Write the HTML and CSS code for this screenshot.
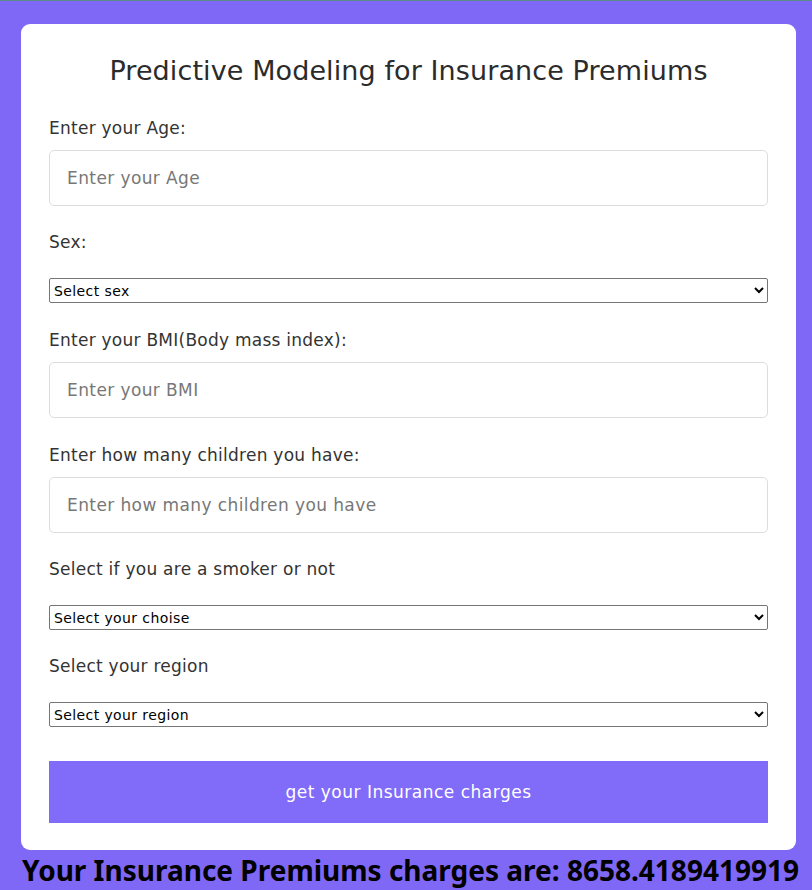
FILE: index.html
```html
<!DOCTYPE html>
<html>
<head>
<meta charset="utf-8">
<title>Insurance Premiums</title>
<link rel="stylesheet" href="styles.css">
</head>
<body>
<div class="topline"></div>
<main class="card">
  <h1 class="title">Predictive Modeling for Insurance Premiums</h1>
  <form class="form">
    <label class="label">Enter your Age:</label>
    <input class="field" type="text" placeholder="Enter your Age">
    <label class="label label-sel">Sex:</label>
    <select class="select"><option>Select sex</option></select>
    <label class="label">Enter your BMI(Body mass index):</label>
    <input class="field" type="text" placeholder="Enter your BMI">
    <label class="label">Enter how many children you have:</label>
    <input class="field" type="text" placeholder="Enter how many children you have">
    <label class="label label-sel">Select if you are a smoker or not</label>
    <select class="select"><option>Select your choise</option></select>
    <label class="label label-sel">Select your region</label>
    <select class="select"><option>Select your region</option></select>
    <button class="btn" type="button">get your Insurance charges</button>
  </form>
</main>
<p class="result">Your Insurance Premiums charges are: 8658.4189419919</p>
</body>
</html>
```
FILE: styles.css
```css
html, body {
  margin: 0;
  padding: 0;
}
body {
  background: #7f68f6;
  font-family: "DejaVu Sans", "Noto Sans", sans-serif;
  color: #333;
  height: 890px;
  overflow: hidden;
}
.topline {
  height: 1px;
  background: #5a8a8a;
}
.card {
  background: #fff;
  margin: 23px 16px 0 21px;
  border-radius: 9px;
  padding: 27px 28px 27px 28px;
}
.title {
  margin: 0;
  text-align: center;
  font-weight: 400;
  font-size: 27px;
  letter-spacing: 0.1px;
  line-height: 40px;
  color: #2b2b2b;
}
.form {
  display: flex;
  flex-direction: column;
}
.label {
  display: block;
  font-size: 17px;
  letter-spacing: 0.25px;
  line-height: 26px;
  margin-top: 24px;
  margin-bottom: 9px;
  color: #333;
}
.label-sel {
  margin-top: 23px;
  margin-bottom: 23px;
}
.field {
  height: 56px;
  box-sizing: border-box;
  border: 1px solid #ddd;
  border-radius: 5px;
  padding: 0 17px;
  font-family: inherit;
  font-size: 17px;
  letter-spacing: 0.4px;
  color: #333;
}
.field::placeholder {
  color: #777;
}
.select {
  height: 25px;
  box-sizing: border-box;
  font-family: inherit;
  font-size: 14px;
  letter-spacing: 0.4px;
  color: #000;
  background: #fff;
  border: 1px solid #767676;
  border-radius: 2px;
}
.btn {
  margin-top: 34px;
  height: 62px;
  border: none;
  background: #816bf9;
  color: #fff;
  font-family: inherit;
  font-size: 17px;
  letter-spacing: 0.5px;
}
.result {
  margin: 2px 0 0 22px;
  font-family: "Noto Sans", sans-serif;
  font-weight: 700;
  font-size: 28px;
  line-height: 36px;
  white-space: nowrap;
  color: #000;
}
```
